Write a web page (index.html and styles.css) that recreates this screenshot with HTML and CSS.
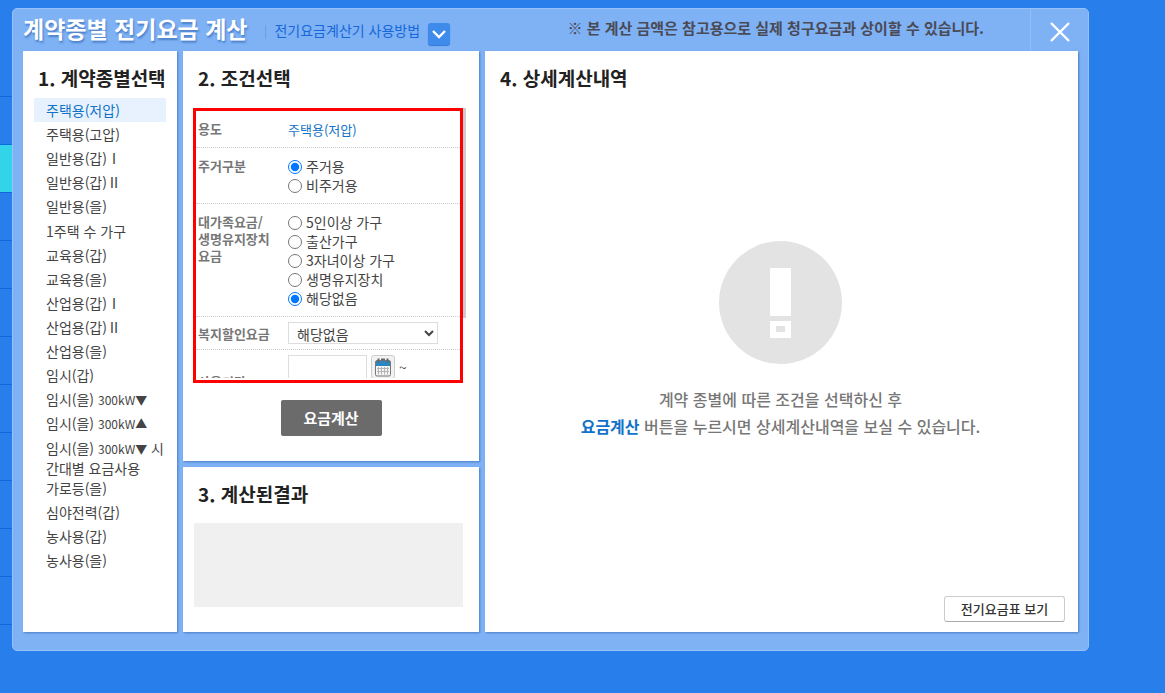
FILE: index.html
```html
<!DOCTYPE html>
<html lang="ko">
<head>
  <meta charset="UTF-8" />
  <meta name="viewport" content="width=device-width, initial-scale=1.0" />
  <title>계약종별 전기요금 계산</title>
  <link rel="stylesheet" href="styles.css">
</head>
<body>
  <div class="page">
    <ul class="side-strip">
      <li></li><li></li><li class="on"></li><li></li><li></li><li></li>
      <li></li><li></li><li></li><li></li><li></li><li></li>
    </ul>

    <div class="popup">
      <header class="popup-header">
        <h1>계약종별 전기요금 계산</h1>
        <div class="guide">
          <a href="#guide">전기요금계산기 사용방법</a>
          <button type="button" class="guide-open" aria-label="사용방법 열기">
            <svg width="14" height="9" viewBox="0 0 14 9"><path d="M1 1l6 6 6-6" fill="none" stroke="#fff" stroke-width="2.400"/></svg>
          </button>
        </div>
        <p class="notice">※ 본 계산 금액은 참고용으로 실제 청구요금과 상이할 수 있습니다.</p>
        <button type="button" class="close" aria-label="닫기">
          <svg width="20" height="20" viewBox="0 0 20 20"><path d="M1 1l18 18M19 1L1 19" fill="none" stroke="#fff" stroke-width="2.400"/></svg>
        </button>
      </header>

      <div class="popup-body">
        <section class="panel types">
          <h2>1. 계약종별선택</h2>
          <ul class="type-list">
            <li><a class="on" href="#">주택용(저압)</a></li>
            <li><a href="#">주택용(고압)</a></li>
            <li><a href="#">일반용(갑)Ⅰ</a></li>
            <li><a href="#">일반용(갑)Ⅱ</a></li>
            <li><a href="#">일반용(을)</a></li>
            <li><a href="#">1주택 수 가구</a></li>
            <li><a href="#">교육용(갑)</a></li>
            <li><a href="#">교육용(을)</a></li>
            <li><a href="#">산업용(갑)Ⅰ</a></li>
            <li><a href="#">산업용(갑)Ⅱ</a></li>
            <li><a href="#">산업용(을)</a></li>
            <li><a href="#">임시(갑)</a></li>
            <li><a href="#">임시(을) <small>300kW▼</small></a></li>
            <li><a href="#">임시(을) <small>300kW▲</small></a></li>
            <li><a href="#">임시(을) <small>300kW▼</small> 시<br>간대별 요금사용<br>가로등(을)</a></li>
            <li><a href="#">심야전력(갑)</a></li>
            <li><a href="#">농사용(갑)</a></li>
            <li><a href="#">농사용(을)</a></li>
          </ul>
        </section>

        <div class="middle">
          <section class="panel">
            <h2>2. 조건선택</h2>
            <form>
              <div class="scroll">
                <div class="conditions">
                  <div class="rows">
                    <div class="row">
                      <span class="label">용도</span>
                      <span class="value">주택용(저압)</span>
                    </div>
                    <div class="row" role="radiogroup" aria-labelledby="houseLabel">
                      <span class="label" id="houseLabel">주거구분</span>
                      <div class="options">
                        <label><input type="radio" name="house" checked>주거용</label>
                        <label><input type="radio" name="house">비주거용</label>
                      </div>
                    </div>
                    <div class="row" role="radiogroup" aria-labelledby="familyLabel">
                      <span class="label" id="familyLabel">대가족요금/<br>생명유지장치<br>요금</span>
                      <div class="options">
                        <label><input type="radio" name="family">5인이상 가구</label>
                        <label><input type="radio" name="family">출산가구</label>
                        <label><input type="radio" name="family">3자녀이상 가구</label>
                        <label><input type="radio" name="family">생명유지장치</label>
                        <label><input type="radio" name="family" checked>해당없음</label>
                      </div>
                    </div>
                    <div class="row control">
                      <label class="label" for="welfare">복지할인요금</label>
                      <select id="welfare">
                        <option>해당없음</option>
                      </select>
                    </div>
                    <div class="row control">
                      <label class="label" for="dateFrom">사용기간</label>
                      <div class="period">
                        <div class="date">
                          <input type="text" id="dateFrom">
                          <button type="button" aria-label="시작일 선택">
                            <svg width="18" height="19" viewBox="0 0 18 19">
                              <rect x="1.500" y="2.500" width="15" height="15.500" rx="1.500" fill="#f4f4f4" stroke="#777"/>
                              <path d="M2 3h14v5H2z" fill="#2b86c0"/>
                              <path d="M4.500 0.500v4M13.500 0.500v4M7 1.500h4" stroke="#666" stroke-width="2"/>
                              <path d="M3 10.500h12M3 13.500h12M4.500 9v7.500M7.500 9v7.500M10.500 9v7.500M13.500 9v7.500" stroke="#b5b5b5"/>
                            </svg>
                          </button>
                          <span>~</span>
                        </div>
                        <div class="date">
                          <input type="text" aria-label="종료일">
                        </div>
                      </div>
                    </div>
                  </div>
                </div>
                <div class="scroll-thumb"></div>
              </div>
              <button type="button" class="calc">요금계산</button>
            </form>
          </section>

          <section class="panel">
            <h2>3. 계산된결과</h2>
            <div class="result"></div>
          </section>
        </div>

        <section class="panel detail">
          <h2>4. 상세계산내역</h2>
          <div class="empty">
            <svg width="123" height="123" viewBox="0 0 123 123">
              <circle cx="61.500" cy="61.500" r="61.500" fill="#e3e3e3"/>
              <path d="M51 27h21v48H51zM51 80h21v17H51z" fill="#fff"/>
              <path d="M57 85h9v6h-9z" fill="#e3e3e3"/>
            </svg>
            <p>계약 종별에 따른 조건을 선택하신 후<br><strong>요금계산</strong> 버튼을 누르시면 상세계산내역을 보실 수 있습니다.</p>
          </div>
          <button type="button" class="rate-table">전기요금표 보기</button>
        </section>
      </div>
    </div>
  </div>
</body>
</html>
```
FILE: styles.css
```css
* {
  box-sizing: border-box;
}
body {
  margin: 0;
  background: #287eea;
  color: #444;
  font-family: "Noto Sans CJK KR", sans-serif;
  font-size: 14px;
  line-height: 20px;
}
h1, h2, p, ul {
  margin: 0;
  padding: 0;
}
ul {
  list-style: none;
}
a {
  color: inherit;
  text-decoration: none;
}
button, input, select {
  font: inherit;
  color: inherit;
}
button {
  padding: 0;
  cursor: pointer;
}
svg {
  display: block;
}
.page {
  display: flex;
  align-items: flex-start;
  padding-right: 76px;
}

/* menu of the page behind the popup */
.side-strip {
  flex: 0 0 12px;
  padding-top: 49px;
}
.side-strip li {
  height: 48px;
  border-bottom: 1px solid #0f68dc;
}
.side-strip .on {
  background: #33d3ea;
}

.popup {
  flex: 1;
  min-width: 0;
  margin-top: 8px;
  padding: 0 10px 18px;
  border: 1px solid #98c1f7;
  border-radius: 5px;
  background: #7fb1f5;
}
.popup-header {
  display: flex;
  align-items: center;
  height: 42px;
}
.popup-header h1 {
  color: #fff;
  font-size: 23px;
  line-height: 38px;
  padding-bottom: 4px;
  text-shadow: 1px 2px 2px #4a7fc8;
}
.guide {
  display: flex;
  align-items: center;
  gap: 8px;
  margin-left: 18px;
  color: #1668d8;
}
.guide::before {
  content: "";
  width: 1px;
  height: 14px;
  margin-top: 4px;
  background: #669fee;
}
.guide-open {
  display: flex;
  align-items: center;
  justify-content: center;
  width: 22px;
  height: 22px;
  margin-top: 8px;
  border: 0;
  border-radius: 3px;
  background: #3f8bec;
  box-shadow: 0 1px 1px #2f78da;
}
.notice {
  flex: 1;
  padding: 0 46px 4px 0;
  color: #4a4a55;
  font-size: 15px;
  font-weight: bold;
  text-align: right;
}
.close {
  display: flex;
  align-items: center;
  justify-content: center;
  width: 58px;
  height: 42px;
  margin-right: -10px;
  padding-top: 4px;
  border: 0;
  border-left: 1px solid #94bef8;
  background: none;
}

.popup-body {
  display: grid;
  grid-template-columns: 154px 296px 1fr;
  gap: 6px;
}
.panel {
  padding-top: 13px;
  background: #fff;
  box-shadow: 1px 1px 2px #4a80c8;
}
.panel h2 {
  padding-left: 15px;
  color: #222;
  font-size: 19px;
  line-height: 28px;
}

.types {
  display: flex;
  flex-direction: column;
  padding-bottom: 60px;
}
.type-list {
  flex: 1;
  display: flex;
  flex-direction: column;
  justify-content: space-between;
  margin: 6px 11px 0;
}
.type-list a {
  display: block;
  padding: 2px 0 2px 12px;
  white-space: nowrap;
}
.type-list small {
  font-size: 12px;
  line-height: 1;
}
.type-list .on {
  background: #e8f2fe;
  color: #1173c7;
}

.middle {
  display: flex;
  flex-direction: column;
  gap: 6px;
}
.middle .panel {
  padding-bottom: 25px;
}
.scroll {
  display: flex;
  margin: 16px 13px 0 10px;
}
.conditions {
  flex: 1;
  padding-bottom: 2px;
  border: 3px solid #f00;
}
.rows {
  height: 267px;
  overflow: hidden;
}
.scroll-thumb {
  width: 3px;
  height: 210px;
  background: #ccc;
}
.row {
  display: flex;
  padding: 9px 0 8px 2px;
  border-bottom: 1px dotted #ccc;
  line-height: 19px;
}
.label {
  flex: 0 0 90px;
  color: #777;
  font-size: 13px;
  font-weight: bold;
  line-height: 17px;
}
.value {
  color: #1173c7;
  font-size: 13px;
}
.options label {
  display: flex;
  align-items: center;
  height: 19px;
}
.options input {
  width: 14px;
  height: 14px;
  margin: 0 4px 0 0;
}
.control {
  align-items: center;
  padding-top: 5px;
  padding-bottom: 5px;
}
.control select {
  width: 150px;
  height: 22px;
  padding: 0 0 0 4px;
  border: 1px solid #ddd;
  background: #fff;
  line-height: 20px;
}
.period {
  display: grid;
  gap: 4px;
}
.date {
  display: flex;
  gap: 4px;
}
.date input {
  width: 79px;
  height: 24px;
  border: 1px solid #ddd;
}
.date button {
  display: flex;
  align-items: center;
  justify-content: center;
  width: 24px;
  height: 24px;
  border: 1px solid #ccc;
  border-radius: 3px;
  background: #f2f2f2;
}
.date span {
  line-height: 24px;
}
.calc {
  display: block;
  width: 101px;
  height: 36px;
  margin: 17px auto 0;
  border: 0;
  border-radius: 2px;
  background: #6b6b6b;
  color: #fff;
  font-size: 15px;
  font-weight: bold;
}
.result {
  height: 84px;
  margin: 15px 16px 0 11px;
  background: #f0f0f0;
}

.detail {
  display: flex;
  flex-direction: column;
  padding-bottom: 10px;
}
.empty {
  flex: 1;
  display: flex;
  flex-direction: column;
  align-items: center;
  justify-content: center;
  gap: 22px;
  padding: 0 2px 8px 0;
}
.empty p {
  color: #777;
  font-size: 16px;
  font-weight: 500;
  line-height: 27px;
  text-align: center;
}
.empty strong {
  color: #1173c7;
}
.rate-table {
  align-self: flex-end;
  width: 121px;
  height: 26px;
  margin-right: 13px;
  border: 1px solid #ccc;
  border-bottom-color: #aaa;
  border-radius: 3px;
  background: #fff;
  color: #333;
  font-size: 13px;
  font-weight: 500;
}
```
